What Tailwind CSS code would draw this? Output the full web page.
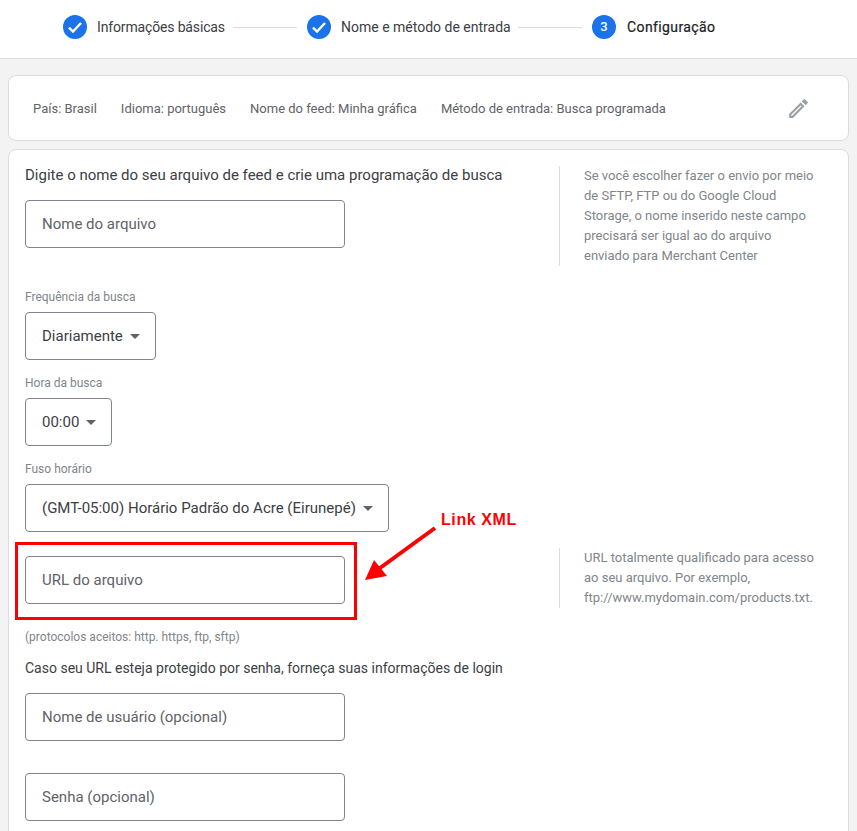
<!DOCTYPE html>
<html><head><meta charset="utf-8">
<script src="https://cdn.jsdelivr.net/npm/@tailwindcss/browser@4"></script>
</head>
<body class="m-0 overflow-hidden">
<div class="relative w-[857px] h-[831px] overflow-hidden bg-[#f3f3f3] font-['Roboto',sans-serif] text-[#3c4043]">
  <header class="h-[59px] bg-white border-b border-[#dcdcdc] flex items-start pt-[15px] pl-[63px] text-[14px]">
    <div class="flex items-center h-[24px]">
      <svg class="w-[24px] h-[24px]" viewBox="0 0 24 24"><circle cx="12" cy="12" r="12" fill="#1a73e8"/><path d="M6 12.6l4 4 8-8.6" fill="none" stroke="#fff" stroke-width="2.4"/></svg>
      <span class="ml-[10px] w-[127px] text-[#3c4043] whitespace-nowrap tracking-[-0.15px]">Informações básicas</span>
      <div class="ml-[9px] w-[64px] h-px bg-[#dadce0]"></div>
      <svg class="ml-[10px] w-[24px] h-[24px]" viewBox="0 0 24 24"><circle cx="12" cy="12" r="12" fill="#1a73e8"/><path d="M6 12.6l4 4 8-8.6" fill="none" stroke="#fff" stroke-width="2.4"/></svg>
      <span class="ml-[10px] w-[169px] text-[#3c4043] whitespace-nowrap">Nome e método de entrada</span>
      <div class="ml-[8px] w-[64px] h-px bg-[#dadce0]"></div>
      <div class="ml-[10px] w-[24px] h-[24px] rounded-full bg-[#1a73e8] text-white text-[13px] font-medium flex items-center justify-center">3</div>
      <span class="ml-[11px] text-[#202124] whitespace-nowrap tracking-[0.4px] [-webkit-text-stroke:0.2px_#202124]">Configuração</span>
    </div>
  </header>

  <section class="mt-[16px] mx-[8px] w-[841px] h-[66px] bg-white border border-[#dadce0] rounded-[8px] flex items-center pl-[24px] pr-[37px] pt-[1px] text-[13px] text-[#5f6368]">
    <span>País: Brasil</span>
    <span class="ml-[24px]">Idioma: português</span>
    <span class="ml-[24px]">Nome do feed: Minha gráfica</span>
    <span class="ml-[24px]">Método de entrada: Busca programada</span>
    <svg class="ml-auto -mt-[1px] w-[25px] h-[25px]" viewBox="0 0 24 24"><path fill="#9aa0a6" d="M14.06 9.02l.92.92L5.92 19H5v-.92l9.06-9.06M17.66 3c-.25 0-.51.1-.7.29l-1.83 1.83 3.75 3.75 1.83-1.83c.39-.39.39-1.02 0-1.41l-2.34-2.34c-.2-.2-.45-.29-.71-.29zm-3.6 3.19L3 17.25V21h3.75L17.81 9.94l-3.75-3.75z"/></svg>
  </section>

  <main class="mt-[8px] mx-[8px] w-[841px] h-[700px] bg-white border border-[#dadce0] rounded-[8px] pl-[16px] pt-[15px]">
    <div class="flex items-start">
      <div class="w-[534px]">
        <h2 class="text-[15px] leading-[20px] text-[#3c4043]">Digite o nome do seu arquivo de feed e crie uma programação de busca</h2>
        <div class="mt-[15px] w-[320px] h-[48px] border border-[#80868b] rounded-[4px] flex items-center pl-[16px] text-[15px] text-[#5f6368]">Nome do arquivo</div>
      </div>
      <div class="mt-[1px] w-[258px] h-[100px] border-l border-[#dadce0] pl-[24px] text-[13px] leading-[20px] text-[#80868b]">Se você escolher fazer o envio por meio de SFTP, FTP ou do Google Cloud Storage, o nome inserido neste campo precisará ser igual ao do arquivo enviado para Merchant Center</div>
    </div>

    <div class="mt-[23px] text-[12px] leading-[16px] text-[#80868b]">Frequência da busca</div>
    <div class="mt-[7px] w-[131px] h-[48px] border border-[#80868b] rounded-[4px] flex items-center pl-[16px] text-[15px] text-[#3c4043]">Diariamente<span class="ml-[7px] w-0 h-0 border-x-[5px] border-x-transparent border-t-[5px] border-t-[#5f6368]"></span></div>

    <div class="mt-[15px] text-[12px] leading-[16px] text-[#80868b]">Hora da busca</div>
    <div class="mt-[7px] w-[87px] h-[48px] border border-[#80868b] rounded-[4px] flex items-center pl-[16px] text-[15px] text-[#3c4043]">00:00<span class="ml-[7px] w-0 h-0 border-x-[5px] border-x-transparent border-t-[5px] border-t-[#5f6368]"></span></div>

    <div class="mt-[15px] text-[12px] leading-[16px] text-[#80868b]">Fuso horário</div>
    <div class="mt-[7px] w-[364px] h-[48px] border border-[#80868b] rounded-[4px] flex items-center pl-[16px] text-[15px] text-[#3c4043] whitespace-nowrap">(GMT-05:00) Horário Padrão do Acre (Eirunepé)<span class="ml-[7px] w-0 h-0 border-x-[5px] border-x-transparent border-t-[5px] border-t-[#5f6368]"></span></div>

    <div class="mt-[24px] flex items-start">
      <div class="w-[534px]">
        <div class="w-[320px] h-[48px] border border-[#80868b] rounded-[4px] flex items-center pl-[16px] text-[15px] text-[#5f6368]">URL do arquivo</div>
        <div class="mt-[25px] text-[12px] leading-[16px] text-[#80868b]">(protocolos aceitos: http. https, ftp, sftp)</div>
      </div>
      <div class="-mt-[8px] w-[258px] h-[60px] border-l border-[#dadce0] pl-[24px] text-[13px] leading-[20px] text-[#80868b]">URL totalmente qualificado para acesso ao seu arquivo. Por exemplo, ftp://www.mydomain.com/products.txt.</div>
    </div>

    <div class="mt-[13px] text-[14px] leading-[20px] text-[#3c4043]">Caso seu URL esteja protegido por senha, forneça suas informações de login</div>
    <div class="mt-[15px] w-[320px] h-[48px] border border-[#80868b] rounded-[4px] flex items-center pl-[16px] text-[15px] text-[#5f6368]">Nome de usuário (opcional)</div>
    <div class="mt-[32px] w-[320px] h-[48px] border border-[#80868b] rounded-[4px] flex items-center pl-[16px] text-[15px] text-[#5f6368]">Senha (opcional)</div>
  </main>

  <!-- annotation overlay -->
  <div class="absolute left-[15px] top-[542px] w-[342px] h-[78px] border-[3px] border-[#ff0000]"></div>
  <div class="absolute left-[441px] top-[510px] font-['Liberation_Sans',sans-serif] font-bold text-[16px] leading-[20px] text-[#ff0000] tracking-[0.6px]">Link XML</div>
  <svg class="absolute left-[360px] top-[522px]" width="80" height="62" viewBox="0 0 80 62"><path d="M75 6L20 46" stroke="#ff0000" stroke-width="4" fill="none"/><path d="M5 58L14 38L27 54z" fill="#ff0000"/></svg>
</div>
</body></html>
